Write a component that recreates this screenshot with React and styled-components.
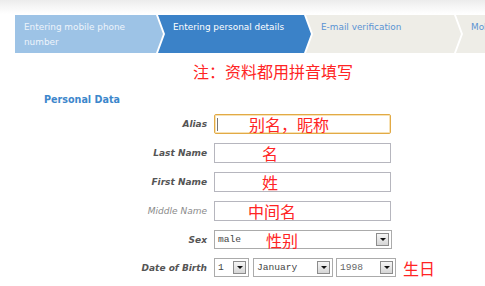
import React from 'react';
import styled, { createGlobalStyle } from 'styled-components';

const Global = createGlobalStyle`
  html, body { margin: 0; padding: 0; }
  body {
    background-color: #fff;
    background-image: linear-gradient(#ececec 0px, #f6f6f6 7px, #ffffff 14px);
    background-repeat: no-repeat;
    background-size: 100% 15px;
    font-family: "DejaVu Sans", Verdana, sans-serif;
  }
`;

const Page = styled.div`
  width: 485px;
  height: 286px;
  overflow: hidden;
  padding-top: 15px;
  box-sizing: border-box;
`;

const Steps = styled.div`
  display: flex;
  margin-left: 15px;
  height: 38px;
`;

const stepColors = {
  done: { bg: '#9dc3e6', fg: '#eef4fb' },
  active: { bg: '#3b82c8', fg: '#ffffff' },
  todo: { bg: '#eeede7', fg: '#5b93d3' },
};

const Step = styled.div`
  flex: 0 0 ${p => p.$w}px;
  margin-left: ${p => (p.$first ? 0 : -5)}px;
  padding: 5px 12px 0 ${p => (p.$first ? 9 : 15)}px;
  box-sizing: border-box;
  background: ${p => stepColors[p.$state].bg};
  color: ${p => stepColors[p.$state].fg};
  font-size: 8.9px;
  line-height: 15px;
  white-space: ${p => (p.$first ? 'normal' : 'nowrap')};
  overflow: hidden;
  clip-path: ${p =>
    p.$first
      ? 'polygon(0 0, calc(100% - 7px) 0, 100% 50%, calc(100% - 7px) 100%, 0 100%)'
      : 'polygon(0 0, calc(100% - 7px) 0, 100% 50%, calc(100% - 7px) 100%, 0 100%, 7px 50%)'};
`;

const Notice = styled.div`
  margin: 8px 0 0 193px;
  height: 20px;
  line-height: 20px;
  font-family: "Noto Sans CJK SC", sans-serif;
  font-size: 16px;
  color: #ff2424;
  white-space: nowrap;
`;

const SectionTitle = styled.div`
  margin: 13px 0 0 44px;
  line-height: 12px;
  font-size: 9.6px;
  font-weight: 700;
  color: #3d87cc;
`;

const Form = styled.div`
  display: flex;
  flex-direction: column;
  gap: 9px;
  margin-top: 8px;
`;

const Row = styled.div`
  display: flex;
  align-items: center;
  height: ${p => p.$h}px;
`;

const Label = styled.div`
  width: 214px;
  padding-right: 7px;
  box-sizing: border-box;
  text-align: right;
  font-size: 9px;
  font-style: italic;
  font-weight: ${p => (p.$light ? 400 : 700)};
  color: ${p => (p.$light ? '#8a8a8a' : '#555555')};
  white-space: nowrap;
`;

const TextBox = styled.div`
  width: 177px;
  height: 20px;
  box-sizing: border-box;
  border: 1px solid ${p => (p.$focus ? '#e2aa45' : '#b6b6be')};
  border-radius: ${p => (p.$focus ? 2 : 0)}px;
  box-shadow: ${p => (p.$focus ? 'inset 0 0 0 1px #f7e2b6' : 'none')};
  background: #fff;
  display: flex;
  align-items: center;
`;

const Caret = styled.span`
  width: 1px;
  height: 13px;
  margin-left: 2px;
  background: #777;
`;

const Note = styled.span`
  margin-left: ${p => p.$ml || 0}px;
  font-family: "Noto Sans CJK SC", sans-serif;
  font-size: 16px;
  line-height: 16px;
  color: #ff2424;
  white-space: nowrap;
`;

const Select = styled.div`
  width: ${p => p.$w}px;
  height: 19px;
  margin-left: ${p => p.$ml || 0}px;
  box-sizing: border-box;
  border: 1px solid #ababab;
  background: #fff;
  display: flex;
  align-items: center;
  padding-left: 3px;
  font-family: "Liberation Mono", "Courier New", monospace;
  font-size: 9.6px;
  color: ${p => p.$fg || '#444'};
  white-space: nowrap;
`;

const SelectText = styled.span`
  flex: 0 0 auto;
`;

const Arrow = styled.span`
  margin-left: auto;
  margin-right: 2px;
  width: 13px;
  height: 13px;
  box-sizing: border-box;
  border: 1px solid #8c8c8c;
  background: linear-gradient(#f6f6f6, #d6d6d6);
  display: flex;
  align-items: center;
  justify-content: center;
  flex: 0 0 auto;
  &::after {
    content: '';
    border-left: 3px solid transparent;
    border-right: 3px solid transparent;
    border-top: 3px solid #111;
  }
`;

export default function App() {
  return (
    <>
      <Global />
      <Page>
        <Steps>
          <Step $first $w={148} $state="done">Entering mobile phone number</Step>
          <Step $w={153} $state="active">Entering personal details</Step>
          <Step $w={155} $state="todo">E-mail verification</Step>
          <Step $w={155} $state="todo">Mobile phone verification</Step>
        </Steps>
        <Notice>注：资料都用拼音填写</Notice>
        <SectionTitle>Personal Data</SectionTitle>
        <Form>
          <Row $h={20}>
            <Label>Alias</Label>
            <TextBox $focus>
              <Caret />
              <Note $ml={31}>别名，昵称</Note>
            </TextBox>
          </Row>
          <Row $h={20}>
            <Label>Last Name</Label>
            <TextBox>
              <Note $ml={47}>名</Note>
            </TextBox>
          </Row>
          <Row $h={20}>
            <Label>First Name</Label>
            <TextBox>
              <Note $ml={47}>姓</Note>
            </TextBox>
          </Row>
          <Row $h={20}>
            <Label $light>Middle Name</Label>
            <TextBox>
              <Note $ml={33}>中间名</Note>
            </TextBox>
          </Row>
          <Row $h={19}>
            <Label>Sex</Label>
            <Select $w={178}>
              <SelectText>male</SelectText>
              <Note $ml={25}>性别</Note>
              <Arrow />
            </Select>
          </Row>
          <Row $h={19}>
            <Label>Date of Birth</Label>
            <Select $w={35}>
              <SelectText>1</SelectText>
              <Arrow />
            </Select>
            <Select $w={80} $ml={4}>
              <SelectText>January</SelectText>
              <Arrow />
            </Select>
            <Select $w={60} $ml={3} $fg="#666">
              <SelectText>1998</SelectText>
              <Arrow />
            </Select>
            <Note $ml={7}>生日</Note>
          </Row>
        </Form>
      </Page>
    </>
  );
}
